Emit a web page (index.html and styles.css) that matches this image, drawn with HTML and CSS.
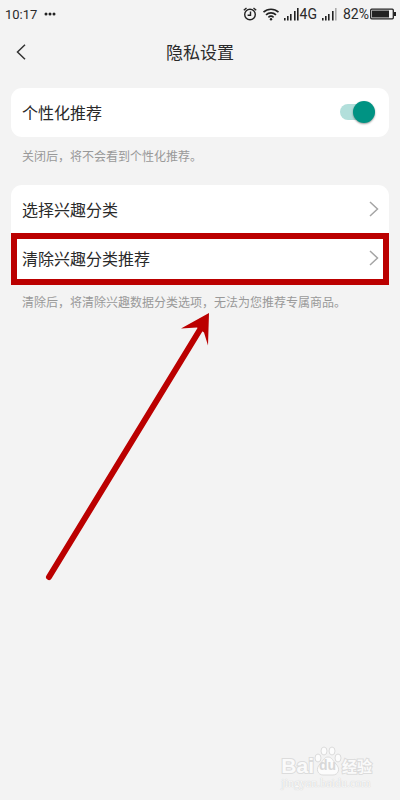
FILE: index.html
```html
<!DOCTYPE html>
<html lang="zh-CN">

<head>
  <meta charset="UTF-8" />
  <meta name="viewport" content="width=device-width, initial-scale=1" />
  <title>隐私设置</title>
  <link rel="stylesheet" href="styles.css">
</head>

<body>
  <div class="screen">
    <div class="status-bar">
      <span class="time">10:17</span>
      <svg class="dots" width="12" height="4" viewBox="0 0 12 4">
        <circle cx="2" cy="2" r="1.5" />
        <circle cx="6" cy="2" r="1.5" />
        <circle cx="10" cy="2" r="1.5" />
      </svg>
      <div class="status-icons">
        <svg width="14" height="14" viewBox="0 0 14 14" fill="none" stroke="#222" stroke-width="1.4">
          <circle cx="7" cy="7.5" r="5.3" />
          <path d="M7.5 4.5v3.7H4.6M.8 3.2L3.5 1M13.2 3.2L10.5 1" />
        </svg>
        <svg class="wifi" width="18" height="14" viewBox="0 0 18 14" fill="none" stroke="#222" stroke-width="1.6">
          <path d="M1.5 5.2a11 11 0 0 1 15 0M4 7.9a7.3 7.3 0 0 1 10 0M6.4 10.3a4 4 0 0 1 5.2 0" />
          <circle cx="9" cy="12.3" r="1.2" fill="#222" stroke="none" />
        </svg>
        <svg width="16" height="14" viewBox="0 0 16 14" fill="#222">
          <path d="M0 11h1.6v2.5H0zM3 9h1.6v4.5H3zM6 7h1.6v6.5H6zM10 4h1.6v9.500H10zM13 1h1.6v12.5H13z" />
        </svg>
        <span class="network">4G</span>
        <svg class="signal" width="16" height="14" viewBox="0 0 16 14" fill="#222">
          <path d="M0 11h1.6v2.5H0zM3 9h1.6v4.5H3zM6 7h1.6v6.5H6zM10 4h1.6v9.5H10z" />
          <path fill="#aaa" d="M13 1h1.6v12.5H13z" />
        </svg>
        <span class="percent">82%</span>
        <svg width="26" height="12" viewBox="0 0 26 12">
          <rect x="0.7" y="1.2" width="22.6" height="9.6" rx="1" fill="none" stroke="#222" stroke-width="1.3" />
          <path fill="#222" d="M2 2.5h17v7H2zM24 4h2v4h-2z" />
        </svg>
      </div>
    </div>

    <header class="nav">
      <button class="back" type="button" aria-label="返回">
        <svg width="10" height="16" viewBox="0 0 10 16" fill="none" stroke="#333" stroke-width="1.5">
          <path d="M9 .7L1.5 8 9 15.3" />
        </svg>
      </button>
      <h1>隐私设置</h1>
    </header>

    <main>
      <div class="card">
        <label class="row" for="personal">
          <span>个性化推荐</span>
          <input class="switch" type="checkbox" id="personal" checked />
        </label>
      </div>
      <p class="hint">关闭后，将不会看到个性化推荐。</p>

      <div class="card">
        <a class="row" href="#">
          <span>选择兴趣分类</span>
          <svg class="chevron" width="10" height="16" viewBox="0 0 10 16">
            <path d="M1 1l7.5 7L1 15" />
          </svg>
        </a>
        <a class="row marked" href="#">
          <span>清除兴趣分类推荐</span>
          <svg class="chevron" width="10" height="16" viewBox="0 0 10 16">
            <path d="M1 1l7.5 7L1 15" />
          </svg>
        </a>
      </div>
      <p class="hint">清除后，将清除兴趣数据分类选项，无法为您推荐专属商品。</p>
    </main>

    <svg class="arrow" width="180" height="280" viewBox="0 0 180 280">
      <path d="M9 267L161 18" fill="none" stroke="#bb0000" stroke-width="6" stroke-linecap="round" />
      <path d="M169 3l-28 15.500 16-1 7 5 4 13z" fill="#bb0000" />
    </svg>

    <div class="watermark">
      <div class="brand">
        <span class="bai">Bai</span>
        <span class="paw">
          <svg width="28" height="30" viewBox="0 0 28 30">
            <ellipse cx="4" cy="12" rx="3" ry="4" />
            <ellipse cx="10" cy="5" rx="3" ry="4" />
            <ellipse cx="18" cy="5" rx="3" ry="4" />
            <ellipse cx="24" cy="12" rx="3" ry="4" />
            <path d="M14 11c-4 0-5 4-8 7-5 5-2 11 3 11h10c5 0 8-6 3-11-3-3-4-7-8-7z" />
          </svg>
          <b>du</b>
        </span>
        <span class="cn">经验</span>
      </div>
      <div class="site">jingyan.baidu.com</div>
    </div>
  </div>
</body>

</html>
```

FILE: styles.css
```css
* {
  box-sizing: border-box;
}

body {
  margin: 0;
  background-color: #f3f3f3;
  color: #2a2a2a;
  font-family: "Noto Sans CJK SC", sans-serif;
}

.screen {
  position: relative;
  min-height: 100vh;
}

.status-bar {
  display: flex;
  align-items: center;
  height: 28px;
  padding: 0 4px 0 5px;
  font-family: Roboto, sans-serif;
  font-size: 14px;
}

.time {
  font-size: 13px;
}

.dots {
  margin-left: 7px;
  fill: #222;
}

.status-icons {
  display: flex;
  align-items: center;
  margin-left: auto;
}

.wifi {
  margin: 0 4px 0 5px;
}

.signal {
  margin: 0 5px;
}

.percent {
  margin-right: 1px;
}

.nav {
  position: relative;
  display: flex;
  align-items: center;
  justify-content: center;
  height: 48px;
}

.nav h1 {
  margin: 0;
  padding-bottom: 2px;
  font-size: 17px;
  font-weight: 400;
}

.back {
  position: absolute;
  left: 8px;
  display: flex;
  padding: 8px;
  border: none;
  background: none;
}

main {
  padding: 12px 11px 0;
}

.card {
  background-color: #fff;
  border-radius: 11px;
}

.row {
  display: flex;
  align-items: center;
  justify-content: space-between;
  height: 49px;
  padding: 0 10px 2px 11px;
  color: #2a2a2a;
  font-size: 16px;
  text-decoration: none;
}

.chevron {
  fill: none;
  stroke: #a5a5a5;
  stroke-width: 1.5;
}

.marked {
  position: relative;
}

.marked::after {
  content: "";
  position: absolute;
  inset: -1px 0 -2px;
  border: 6px solid #bb0000;
}

.switch {
  position: relative;
  appearance: none;
  width: 34px;
  height: 16px;
  margin: 0 5px 0 0;
  border-radius: 8px;
  background-color: #b2dfdb;
}

.switch::after {
  content: "";
  position: absolute;
  top: -3px;
  right: -1px;
  width: 22px;
  height: 22px;
  border-radius: 50%;
  background-color: #009383;
  box-shadow: 0 1px 2px rgba(0, 0, 0, 0.4);
}

.hint {
  margin: 0;
  padding: 10px 11px 20px;
  color: #999;
  font-size: 12px;
  line-height: 18px;
}

.arrow {
  position: absolute;
  top: 310px;
  left: 40px;
}

.watermark {
  position: absolute;
  right: 28px;
  bottom: 10px;
  color: #fafafa;
  font-family: "Liberation Sans", sans-serif;
}

.brand {
  display: flex;
  align-items: flex-end;
  font-size: 21px;
  font-weight: 700;
  line-height: 20px;
}

.bai {
  -webkit-text-stroke: 2px #dcdcdc;
  paint-order: stroke;
}

.paw {
  position: relative;
  height: 30px;
}

.paw svg {
  fill: #fcfcfc;
  stroke: #dcdcdc;
}

.paw b {
  position: absolute;
  left: 5px;
  bottom: 1px;
  color: #d8d8d8;
  font-size: 14px;
}

.cn {
  font-family: "Noto Sans CJK SC", sans-serif;
  font-size: 15px;
  -webkit-text-stroke: 2px #dcdcdc;
  paint-order: stroke;
}

.site {
  color: #fafafa;
  font-family: "Liberation Serif", serif;
  font-size: 12px;
  line-height: 14px;
  text-shadow: 0 0 1px #bbb;
}
```
